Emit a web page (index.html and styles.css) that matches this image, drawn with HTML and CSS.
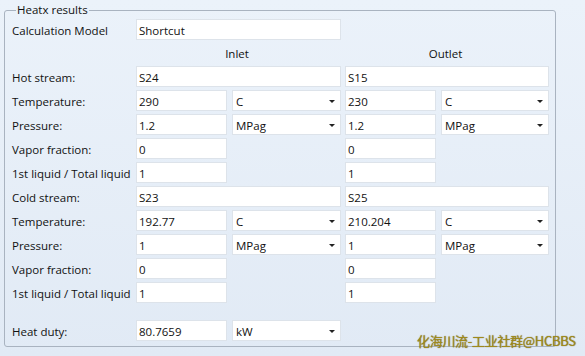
FILE: index.html
```html
<!DOCTYPE html>
<html>
<head>
<meta charset="utf-8">
<link rel="stylesheet" href="styles.css">
</head>
<body>
<div class="page">
  <fieldset class="group">
    <legend class="title">Heatx results</legend>
    <div class="form">
      <div class="lbl">Calculation Model</div>
      <div class="box span3">Shortcut</div>
      <div class="empty span4"></div>

      <div class="lbl"></div>
      <div class="head span3">Inlet</div>
      <div class="sp"></div>
      <div class="head span3">Outlet</div>

      <div class="lbl">Hot stream:</div>
      <div class="box span3">S24</div>
      <div class="sp"></div>
      <div class="box span3">S15</div>

      <div class="lbl">Temperature:</div>
      <div class="box">290</div><div class="sp"></div><div class="box combo">C<span class="arr"></span></div><div class="sp"></div>
      <div class="box">230</div><div class="sp"></div><div class="box combo">C<span class="arr"></span></div>

      <div class="lbl">Pressure:</div>
      <div class="box">1.2</div><div class="sp"></div><div class="box combo">MPag<span class="arr"></span></div><div class="sp"></div>
      <div class="box">1.2</div><div class="sp"></div><div class="box combo">MPag<span class="arr"></span></div>

      <div class="lbl">Vapor fraction:</div>
      <div class="box">0</div><div class="empty span3"></div>
      <div class="box">0</div><div class="empty span2"></div>

      <div class="lbl">1st liquid / Total liquid</div>
      <div class="box">1</div><div class="empty span3"></div>
      <div class="box">1</div><div class="empty span2"></div>

      <div class="lbl">Cold stream:</div>
      <div class="box span3">S23</div>
      <div class="sp"></div>
      <div class="box span3">S25</div>

      <div class="lbl">Temperature:</div>
      <div class="box">192.77</div><div class="sp"></div><div class="box combo">C<span class="arr"></span></div><div class="sp"></div>
      <div class="box">210.204</div><div class="sp"></div><div class="box combo">C<span class="arr"></span></div>

      <div class="lbl">Pressure:</div>
      <div class="box">1</div><div class="sp"></div><div class="box combo">MPag<span class="arr"></span></div><div class="sp"></div>
      <div class="box">1</div><div class="sp"></div><div class="box combo">MPag<span class="arr"></span></div>

      <div class="lbl">Vapor fraction:</div>
      <div class="box">0</div><div class="empty span3"></div>
      <div class="box">0</div><div class="empty span2"></div>

      <div class="lbl">1st liquid / Total liquid</div>
      <div class="box">1</div><div class="empty span3"></div>
      <div class="box">1</div><div class="empty span2"></div>

      <div class="spacer"></div>

      <div class="lbl">Heat duty:</div>
      <div class="box">80.7659</div><div class="sp"></div><div class="box combo">kW<span class="arr"></span></div>
      <div class="empty span4"></div>
    </div>
  </fieldset>
  <div class="watermark">化海川流-工业社群@HCBBS</div>
</div>
</body>
</html>
```

FILE: styles.css
```css
html, body {
  margin: 0;
  padding: 0;
}
body {
  width: 585px;
  height: 356px;
  overflow: hidden;
  background: linear-gradient(#ebf2fa, #e1eaf5);
  font-family: "Open Sans", "Noto Sans CJK SC", sans-serif;
  font-size: 11.5px;
  color: #111;
}
.page {
  position: relative;
  width: 585px;
  height: 356px;
  padding: 3px 0 0 4px;
  box-sizing: border-box;
}
.group {
  width: 552px;
  height: 344px;
  box-sizing: border-box;
  margin: 0;
  padding: 0 0 0 7px;
  border: 1px solid #a9b3c0;
  border-radius: 3px;
  min-width: 0;
}
.title {
  padding: 0 1px;
  margin-left: 4px;
  line-height: 14px;
  color: #111;
}
.form {
  display: grid;
  grid-template-columns: 124px 91px 5px 109px 4px 91px 5px 108px;
  grid-template-rows: 21px 20px repeat(10, 21px) 11px 21px;
  row-gap: 3px;
  margin-top: 2px;
}
.lbl {
  display: flex;
  align-items: center;
  white-space: nowrap;
  padding-top: 1px;
}
.box {
  background: #fff;
  border: 1px solid #dde3ea;
  box-sizing: border-box;
  display: flex;
  align-items: center;
  padding: 1px 0 0 2px;
  white-space: nowrap;
  position: relative;
}
.combo {
  padding-left: 3px;
}
.arr {
  position: absolute;
  right: 5px;
  top: 9px;
  width: 0;
  height: 0;
  border-left: 3px solid transparent;
  border-right: 3px solid transparent;
  border-top: 3px solid #222;
}
.span3 { grid-column: span 3; }
.span4 { grid-column: span 4; }
.span2 { grid-column: span 2; }
.spacer { grid-column: 1 / -1; }
.head {
  display: flex;
  align-items: center;
  justify-content: center;
  padding-right: 3px;
}
.watermark {
  position: absolute;
  left: 417px;
  top: 333px;
  font-family: "Noto Sans CJK SC", sans-serif;
  font-size: 13px;
  line-height: 16px;
  color: #a08a1c;
  text-shadow: 0 0 1px #6b5c10;
  letter-spacing: -0.3px;
}
```
